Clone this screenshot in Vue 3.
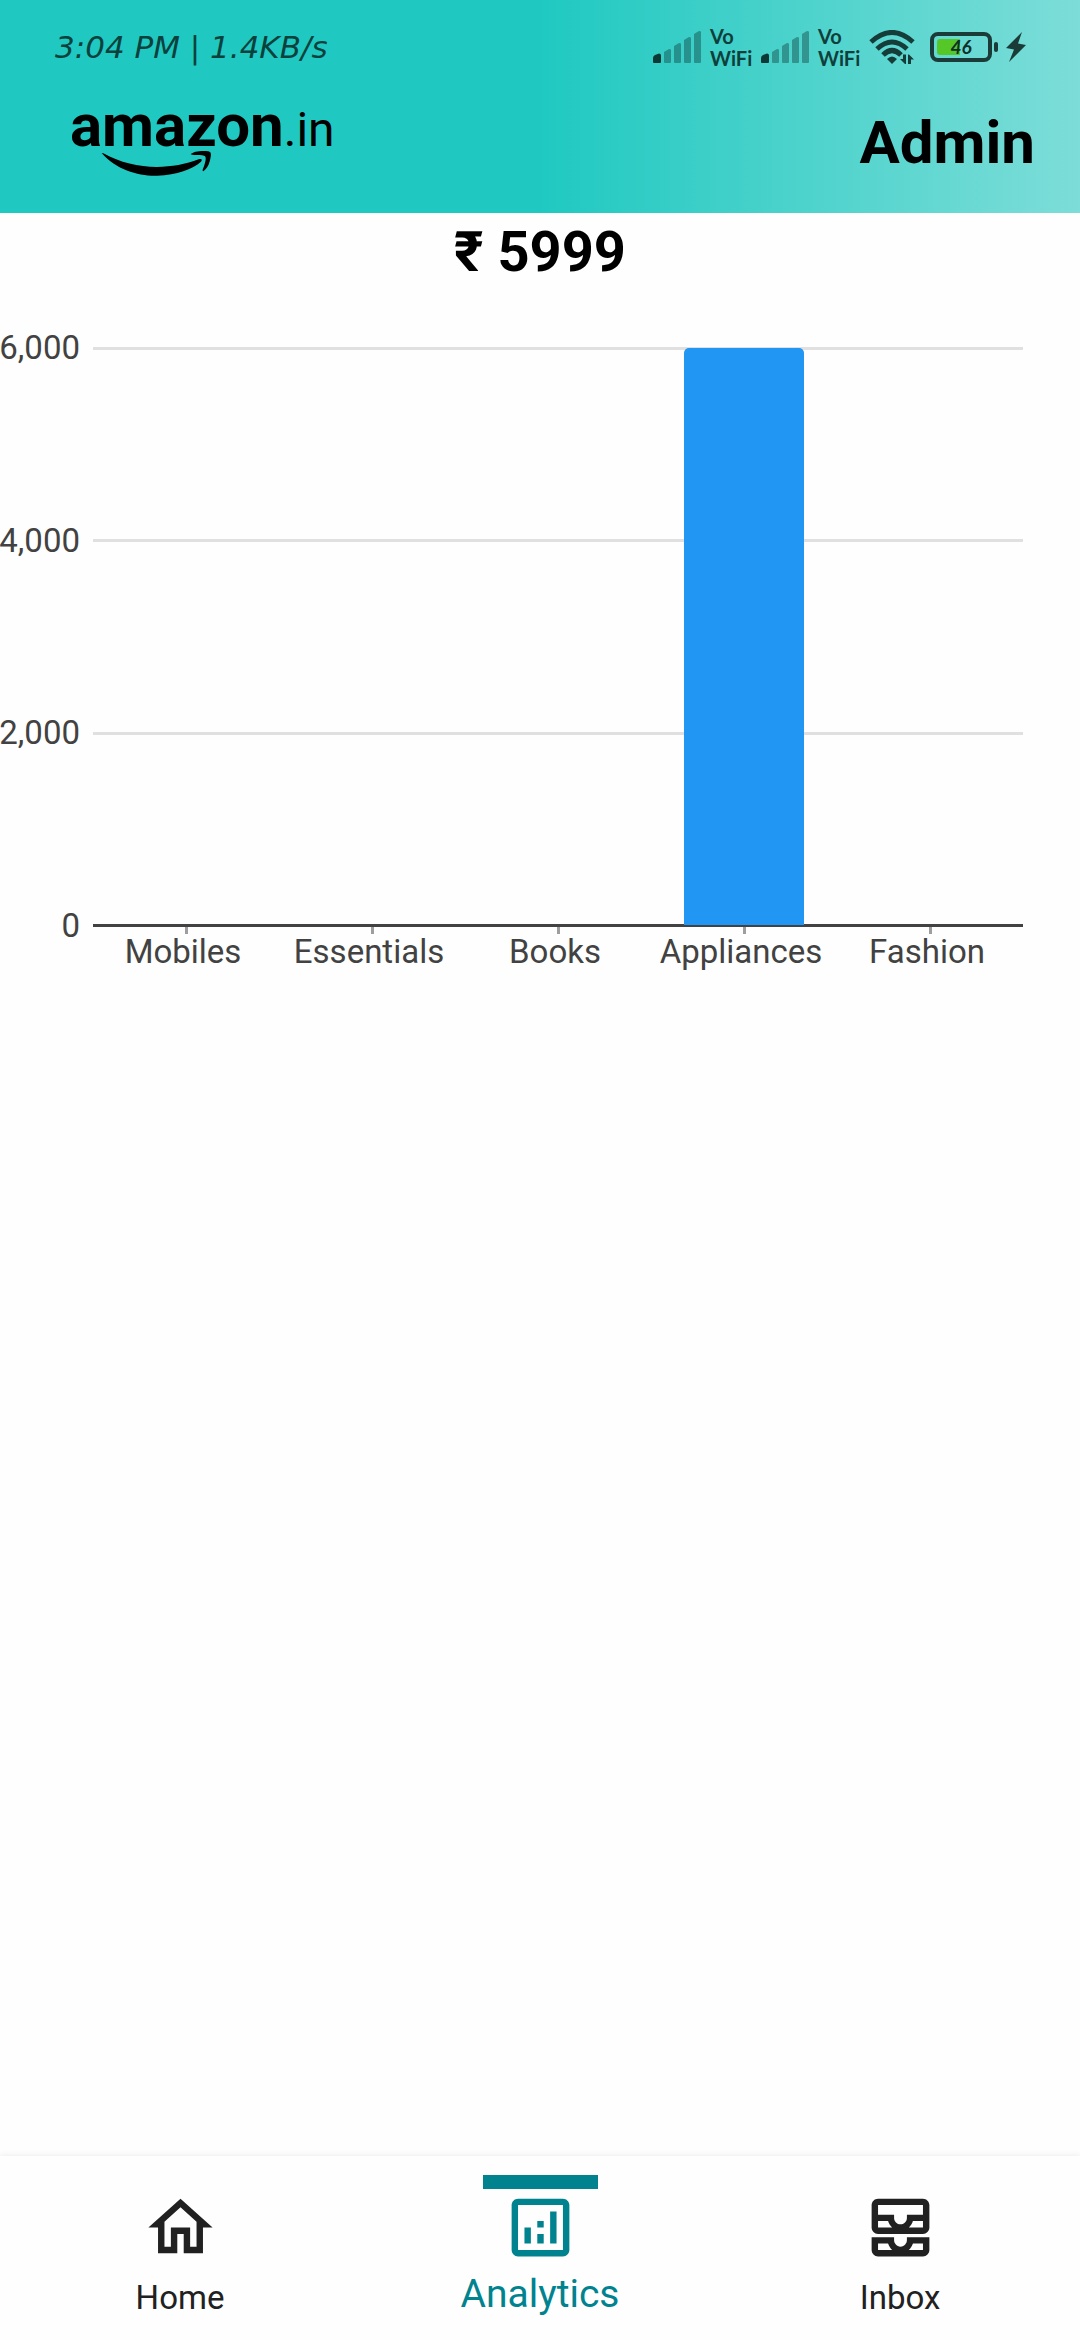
<script setup>
import { computed } from 'vue'

const sales = [
  { label: 'Mobiles', value: 0 },
  { label: 'Essentials', value: 0 },
  { label: 'Books', value: 0 },
  { label: 'Appliances', value: 5999 },
  { label: 'Fashion', value: 0 },
]
const ticks = [6000, 4000, 2000, 0]
const maxTick = ticks[0]
const total = computed(() => sales.reduce((sum, s) => sum + s.value, 0))

const tabs = [
  {
    label: 'Home',
    icon: 'M12 5.69l5 4.5V18h-2v-6H9v6H7v-7.81l5-4.5M12 3L2 12h3v8h6v-6h2v6h6v-8h3L12 3z',
  },
  {
    label: 'Analytics',
    active: true,
    icon: 'M19 3H5c-1.1 0-2 .9-2 2v14c0 1.1.9 2 2 2h14c1.1 0 2-.9 2-2V5c0-1.1-.9-2-2-2zm0 16H5V5h14v14zM7 12h2v5H7zM15 7h2v10h-2zM11 14h2v3h-2zM11 10h2v2h-2z',
  },
  {
    label: 'Inbox',
    icon: 'M19 3H5c-1.1 0-2 .9-2 2v7c0 1.1.9 2 2 2h14c1.1 0 2-.9 2-2V5c0-1.1-.9-2-2-2zM5 10h3.13c.21.78.67 1.47 1.27 2H5v-2zm14 2h-4.4c.6-.53 1.06-1.22 1.27-2H19v2zm0-4h-5v1c0 1.07-.93 2-2 2s-2-.93-2-2V8H5V5h14v3zm-5 7v1c0 .47-.19.9-.48 1.25-.37.45-.92.75-1.52.75s-1.15-.3-1.52-.75c-.29-.35-.48-.78-.48-1.25v-1H3v4c0 1.1.9 2 2 2h14c1.1 0 2-.9 2-2v-4h-7zm-9 2h3.13c.02.09.06.17.09.25.24.68.65 1.28 1.18 1.75H5v-2zm14 2h-4.4c.54-.47.95-1.07 1.18-1.75.03-.08.07-.16.09-.25H19v2z',
  },
]
</script>

<template>
  <div class="screen">
    <header class="header">
      <div class="status">
        <span class="clock">3:04 PM | 1.4KB/s</span>
        <div class="indicators">
          <div v-for="sim in 2" :key="sim" class="sim">
            <svg class="signal" viewBox="0 0 48 32" aria-hidden="true">
              <path d="M0 31v-4q0-2 2-3l4-1.500q2 0 2 2V31q0 1-1 1H1q-1 0-1-1z" fill="#0c3835" />
              <g fill="#0c3835" fill-opacity=".4">
                <path d="M11 31V21l5-3q2 0 2 1v12q0 1-1 1h-5q-1 0-1-1z" />
                <path d="M21 31V15l5-3q2 0 2 1v18q0 1-1 1h-5q-1 0-1-1z" />
                <path d="M31 31V9l5-3q2 0 2 1v24q0 1-1 1h-5q-1 0-1-1z" />
                <path d="M41 31V3l5-3q2 0 2 1v30q0 1-1 1h-5q-1 0-1-1z" />
              </g>
            </svg>
            <span class="volte"><span>Vo</span><span>WiFi</span></span>
          </div>
          <svg class="wifi" viewBox="0 0 46 34" aria-hidden="true">
            <g fill="none" stroke="#163c39" stroke-width="5">
              <path d="M2 12Q23-7 44 12" />
              <path d="M8 19Q23 5 38 19" />
              <path d="M14 25Q23 16 32 25" />
            </g>
            <path d="M18 29q5-5 10 0l-5 5z" fill="#163c39" />
            <path d="M34 24.500h3V34h-1l-5-5h3zM39 34v-9.500h1l5 5h-3V34z" fill="#163c39" />
          </svg>
          <div class="power">
            <div class="battery"><span class="level"></span><span class="percent">46</span></div>
            <span class="nub"></span>
          </div>
          <svg class="bolt" viewBox="0 0 20 30" aria-hidden="true">
            <path d="M16 0L0 16l8 1.500L3 30 20 13l-8-1.500z" fill="#1b3b39" />
          </svg>
        </div>
      </div>
      <div class="appbar">
        <div class="logo">
          <span class="wordmark">amazon<span class="tld">.in</span></span>
          <svg class="smile" viewBox="120 165 354 90" aria-hidden="true">
            <path d="M125 186C170 238 238 256 292 254 350 252 398 234 423 212 428 206 424 202 416 205 330 238 220 238 130 187z" />
            <path d="M392 190C400 181 425 178 445 181 456 183 453 195 450 208 446 225 438 236 430 241 425 240 430 232 432 226 438 208 439 198 434 195 425 191 405 195 392 190z" />
          </svg>
        </div>
        <h1 class="role">Admin</h1>
      </div>
    </header>

    <main class="content">
      <h2 class="total">₹ {{ total }}</h2>
      <figure class="chart" aria-label="Earnings by category">
        <div class="scale">
          <span v-for="t in ticks" :key="t">{{ t.toLocaleString('en-US') }}</span>
        </div>
        <div class="plot">
          <div class="lines"><i v-for="t in ticks" :key="t"></i></div>
          <div class="bars">
            <div v-for="s in sales" :key="s.label" class="slot">
              <div class="bar" :style="{ height: (s.value / maxTick) * 100 + '%' }"></div>
            </div>
          </div>
        </div>
        <div class="marks"><i v-for="s in sales" :key="s.label"></i></div>
        <div class="labels"><span v-for="s in sales" :key="s.label">{{ s.label }}</span></div>
      </figure>
    </main>

    <nav class="tabs">
      <button v-for="t in tabs" :key="t.label" type="button" class="tab" :class="{ active: t.active }">
        <span class="marker"></span>
        <svg class="icon" viewBox="0 0 24 24" aria-hidden="true"><path :d="t.icon" fill="currentColor" /></svg>
        <span class="caption">{{ t.label }}</span>
      </button>
    </nav>
  </div>
</template>

<style>
body {
  background: #fefefe;
}
</style>

<style scoped>
.screen {
  min-height: 100vh;
  display: flex;
  flex-direction: column;
  font-family: Roboto, sans-serif;
  color: #000;
}
.header {
  background: linear-gradient(90deg, #1fc9c1 50%, #7dddd8 100%);
  height: 213px;
}
.status {
  display: flex;
  justify-content: space-between;
  align-items: center;
  height: 94px;
  padding: 0 54px 0 55px;
}
.clock {
  font: italic 31px 'DejaVu Sans', sans-serif;
  color: #0b413d;
}
.indicators {
  display: flex;
  align-items: center;
}
.sim {
  display: flex;
  align-items: center;
  gap: 9px;
  width: 108px;
}
.signal {
  width: 48px;
  height: 32px;
}
.volte {
  display: flex;
  flex-direction: column;
  font: 700 20px/22px Lato, sans-serif;
  color: #0f3f3b;
}
.wifi {
  width: 46px;
  height: 34px;
}
.power {
  display: flex;
  align-items: center;
  gap: 2px;
  margin: 0 8px 0 15px;
}
.battery {
  position: relative;
  display: flex;
  align-items: center;
  justify-content: center;
  box-sizing: border-box;
  width: 62px;
  height: 30px;
  border: 4px solid #1b3b39;
  border-radius: 8px;
}
.level {
  position: absolute;
  left: 3px;
  top: 3px;
  width: 23px;
  height: 16px;
  border-radius: 3px 0 0 3px;
  background: #55c727;
}
.percent {
  position: relative;
  font: italic 700 19px/20px Lato, sans-serif;
  color: #0e3029;
}
.nub {
  width: 4px;
  height: 10px;
  border-radius: 2px;
  background: #1b3b39;
}
.bolt {
  width: 20px;
  height: 30px;
}
.appbar {
  display: flex;
  justify-content: space-between;
  padding: 0 45px 0 70px;
}
.logo {
  display: flex;
  flex-direction: column;
}
.wordmark {
  font: 700 60px/64px Roboto, sans-serif;
  white-space: nowrap;
}
.tld {
  font-weight: 400;
  font-size: 48px;
}
.smile {
  width: 118px;
  height: 30px;
  margin: -16px 0 0 30px;
}
.role {
  margin: 14px 0 0;
  font-size: 60px;
  line-height: 70px;
  font-weight: 700;
}
.content {
  flex: 1;
}
.total {
  margin: 7px 0 0;
  font-size: 56px;
  line-height: 64px;
  font-weight: 700;
  text-align: center;
}
.chart {
  display: grid;
  grid-template-columns: 80px 1fr;
  column-gap: 13px;
  margin: 44px 57px 0 0;
  font-size: 33px;
  line-height: 40px;
  color: #424242;
}
.scale {
  display: flex;
  flex-direction: column;
  justify-content: space-between;
  align-items: flex-end;
}
.plot {
  display: grid;
  height: 580px;
  margin: 19px 0;
}
.lines,
.bars {
  grid-area: 1 / 1;
}
.lines {
  display: flex;
  flex-direction: column;
  justify-content: space-between;
}
.lines i {
  height: 3px;
  background: #e0e0e0;
}
.lines i:last-child {
  background: #424242;
}
.bars,
.marks,
.labels {
  display: grid;
  grid-template-columns: repeat(5, 1fr);
  justify-items: center;
}
.bars {
  padding: 1px 0 2px;
}
.slot {
  display: flex;
  align-items: flex-end;
  width: 65%;
}
.bar {
  width: 100%;
  border-radius: 5px 5px 0 0;
  background: #2196f3;
}
.marks,
.labels {
  grid-column: 2;
}
.marks {
  height: 7px;
  margin-top: -19px;
}
.marks i {
  width: 3px;
  background: #9e9e9e;
}
.labels {
  margin: -14px 3px 0 -3px;
}
.tabs {
  display: grid;
  grid-template-columns: repeat(3, 1fr);
  height: 184px;
  box-shadow: 0 -1px 6px rgba(0, 0, 0, 0.07);
  background: #fefefe;
}
.tab {
  display: flex;
  flex-direction: column;
  align-items: center;
  padding: 19px 0 0;
  border: 0;
  background: none;
  font: 33px/40px Roboto, sans-serif;
  color: #212121;
}
.marker {
  width: 115px;
  height: 14px;
}
.icon {
  width: 77px;
  height: 77px;
}
.caption {
  margin-top: 12px;
}
.active {
  color: #00838f;
}
.active .marker {
  background: #00838f;
}
.active .caption {
  margin-top: 8px;
  font-size: 39px;
}
</style>
